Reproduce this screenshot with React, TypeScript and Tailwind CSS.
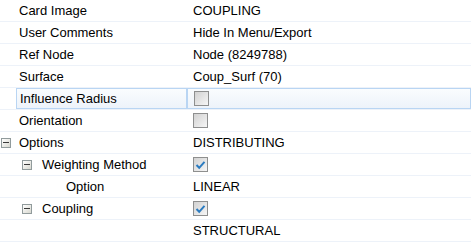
import React from "react";

type Row = {
  label: string;
  level: number;
  expander?: boolean;
  value?: string;
  check?: boolean;
  selected?: boolean;
};

const rows: Row[] = [
  { label: "Card Image", level: 0, value: "COUPLING" },
  { label: "User Comments", level: 0, value: "Hide In Menu/Export" },
  { label: "Ref Node", level: 0, value: "Node (8249788)" },
  { label: "Surface", level: 0, value: "Coup_Surf (70)" },
  { label: "Influence Radius", level: 0, check: false, selected: true },
  { label: "Orientation", level: 0, check: false },
  { label: "Options", level: 0, expander: true, value: "DISTRIBUTING" },
  { label: "Weighting Method", level: 1, expander: true, check: true },
  { label: "Option", level: 2, value: "LINEAR" },
  { label: "Coupling", level: 1, expander: true, check: true },
  { label: "", level: 2, value: "STRUCTURAL" },
];

const Minus = () => (
  <span className="w-[10px] h-[10px] border border-[#919b9c] bg-gradient-to-br from-white to-[#d8d8d0] flex items-center justify-center">
    <span className="w-[6px] h-px bg-[#3a3a3a]" />
  </span>
);

const CheckBox = ({ checked }: { checked: boolean }) => (
  <span className="w-[15px] h-[15px] border border-[#8e8f8f] bg-gradient-to-br from-[#d2d2d2] to-[#f6f6f6] flex items-center justify-center">
    {checked && (
      <svg width="11" height="10" viewBox="0 0 11 10">
        <path d="M1.5 5 L4.2 7.8 L9.5 1.8" fill="none" stroke="#2b7bc0" strokeWidth="2" />
      </svg>
    )}
  </span>
);

export default function App() {
  return (
    <div
      className="w-[471px] h-[248px] bg-white text-black text-[13px] overflow-hidden"
      style={{ fontFamily: "'Liberation Sans', Arial, sans-serif" }}
    >
      {rows.map((r, i) => {
        const expanderX = r.level === 0 ? "pl-[1px]" : "pl-[22px]";
        const labelPad = r.level === 0 ? "pl-[19px]" : r.level === 1 ? "pl-[42px]" : "pl-[66px]";
        return (
          <div key={i} className="flex h-[22px] border-b border-[#edf2f9]">
            <div className="relative w-[187px] shrink-0 flex items-center">
              {r.expander && (
                <span className={`absolute left-0 top-0 h-full flex items-center ${expanderX}`}>
                  <Minus />
                </span>
              )}
              {r.selected ? (
                <div className="ml-[16px] flex-1 h-full flex items-center pl-[3px] border border-[#b9d5f3] bg-gradient-to-b from-[#fafcfe] to-[#edf3fa]">
                  {r.label}
                </div>
              ) : (
                <div className={`${labelPad} whitespace-nowrap`}>{r.label}</div>
              )}
            </div>
            <div
              className={`flex-1 flex items-center pl-[6px] ${
                r.selected ? "border border-[#b9d5f3] bg-gradient-to-b from-[#fafcfe] to-[#edf3fa]" : ""
              }`}
            >
              {r.check !== undefined ? <CheckBox checked={r.check} /> : <span className="whitespace-nowrap">{r.value}</span>}
            </div>
          </div>
        );
      })}
    </div>
  );
}
